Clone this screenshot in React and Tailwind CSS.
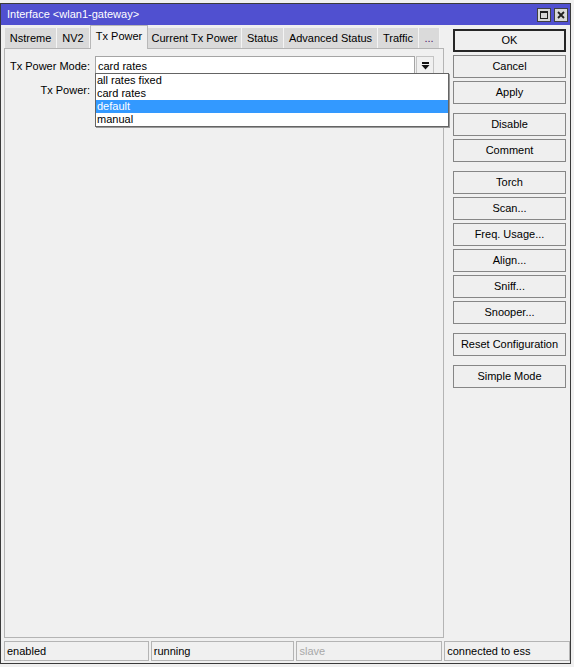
import React from 'react';

const tabs = [
    { label: 'Nstreme', w: 'w-[52px]' },
    { label: 'NV2', w: 'w-[33px]' },
    { label: 'Tx Power', w: 'w-[58px]', active: true },
    { label: 'Current Tx Power', w: 'w-[94px]' },
    { label: 'Status', w: 'w-[42px]' },
    { label: 'Advanced Status', w: 'w-[94px]' },
    { label: 'Traffic', w: 'w-[41px]' },
    { label: '...', w: 'w-[21px]', dots: true },
];

const buttonGroups = [
    ['OK', 'Cancel', 'Apply'],
    ['Disable', 'Comment'],
    ['Torch', 'Scan...', 'Freq. Usage...', 'Align...', 'Sniff...', 'Snooper...'],
    ['Reset Configuration'],
    ['Simple Mode'],
];

const modes = ['all rates fixed', 'card rates', 'default', 'manual'];

function Tab({ tab }) {
    if (tab.active) {
        return (
            <div className={`${tab.w} h-[24px] -mb-px relative z-10 bg-[#f0f0f0] border-t border-l border-r border-[#b8b8b8] flex items-center justify-center pb-[2px]`}>
                {tab.label}
            </div>
        );
    }
    return (
        <div className={`${tab.w} h-[20px] bg-[#dadada] border-r border-[#f4f4f4] flex items-center justify-center ${tab.dots ? 'text-[#4a1a6a]' : ''}`}>
            {tab.label}
        </div>
    );
}

function SideButton({ label, primary }) {
    return (
        <button
            type="button"
            className={`w-[113px] h-[23px] bg-[#efefef] flex items-center justify-center text-black ${primary ? 'border-2 border-[#262626]' : 'border border-[#868686]'}`}
        >
            {label}
        </button>
    );
}

function StatusCell({ text, w, muted }) {
    return (
        <div className={`${w} h-[20px] border border-[#b4b4b4] flex items-center pl-[2px] ${muted ? 'text-[#a8a8a8]' : 'text-black'}`}>
            {text}
        </div>
    );
}

export default function App() {
    return (
        <div className="w-[574px] h-[667px] bg-[#f0f0f0] pt-[3px] font-['Liberation_Sans',Arial,sans-serif] text-[11px] text-black leading-none">
            <div className="w-[571px] h-[661px] border border-[#3a3a3a] flex flex-col">
                {/* title bar */}
                <div className="h-[21px] bg-[#5050d0] flex items-center pl-[6px] pr-[2px]">
                    <span className="text-white flex-1">Interface &lt;wlan1-gateway&gt;</span>
                    <div className="flex gap-[3px]">
                        <div className="w-[14px] h-[14px] bg-[#d8d8d8] border border-[#404040] flex items-center justify-center">
                            <div className="w-[8px] h-[8px] border border-[#202020] border-t-2" />
                        </div>
                        <div className="w-[14px] h-[14px] bg-[#d8d8d8] border border-[#404040] flex items-center justify-center">
                            <svg width="8" height="8" viewBox="0 0 8 8">
                                <path d="M1 1 L7 7 M7 1 L1 7" stroke="#202020" strokeWidth="1.8" />
                            </svg>
                        </div>
                    </div>
                </div>

                <div className="flex-1 flex flex-col">
                    <div className="flex flex-1">
                        {/* tabs + panel */}
                        <div className="pl-[3px] flex flex-col">
                            <div className="h-[23px] flex items-end pl-[1px]">
                                {tabs.map((t) => (
                                    <Tab key={t.label} tab={t} />
                                ))}
                            </div>
                            <div className="w-[440px] flex-1 border border-[#b4b4b4] relative pt-[7px]">
                                <div className="flex items-center h-[20px]">
                                    <div className="w-[85px] text-right">Tx Power Mode:</div>
                                    <div className="ml-[5px] w-[320px] h-[20px] bg-white border border-[#a5a5a5] flex items-center pl-[2px]">
                                        card rates
                                    </div>
                                    <div className="ml-[1px] w-[18px] h-[20px] bg-[#f0f0f0] border border-[#c4c4c4] flex items-center justify-center">
                                        <svg width="9" height="8" viewBox="0 0 9 8">
                                            <rect x="1" y="0" width="7" height="2" fill="#111" />
                                            <path d="M0.5 3 L8.5 3 L4.5 7.5 Z" fill="#111" />
                                        </svg>
                                    </div>
                                </div>
                                <div className="flex items-center h-[20px] mt-[4px]">
                                    <div className="w-[85px] text-right">Tx Power:</div>
                                </div>

                                {/* open dropdown list */}
                                <div className="absolute left-[90px] top-[24px] w-[354px] bg-white border border-[#646464] shadow-[1px_1px_0_#9a9a9a] z-20">
                                    {modes.map((m) => (
                                        <div
                                            key={m}
                                            className={`h-[13px] flex items-center pl-[1px] ${m === 'default' ? 'bg-[#3399ff] text-white' : ''}`}
                                        >
                                            {m}
                                        </div>
                                    ))}
                                </div>
                            </div>
                        </div>

                        {/* side buttons */}
                        <div className="ml-[9px] pt-[4px] flex flex-col gap-[9px]">
                            {buttonGroups.map((g, i) => (
                                <div key={i} className="flex flex-col gap-[3px]">
                                    {g.map((b) => (
                                        <SideButton key={b} label={b} primary={b === 'OK'} />
                                    ))}
                                </div>
                            ))}
                        </div>
                    </div>

                    {/* status bar */}
                    <div className="flex items-center pl-[3px] mt-[3px] mb-[2px] gap-[2px]">
                        <StatusCell text="enabled" w="w-[145px]" />
                        <StatusCell text="running" w="w-[144px]" />
                        <StatusCell text="slave" w="w-[146px]" muted />
                        <StatusCell text="connected to ess" w="w-[126px]" />
                    </div>
                </div>
            </div>
        </div>
    );
}
